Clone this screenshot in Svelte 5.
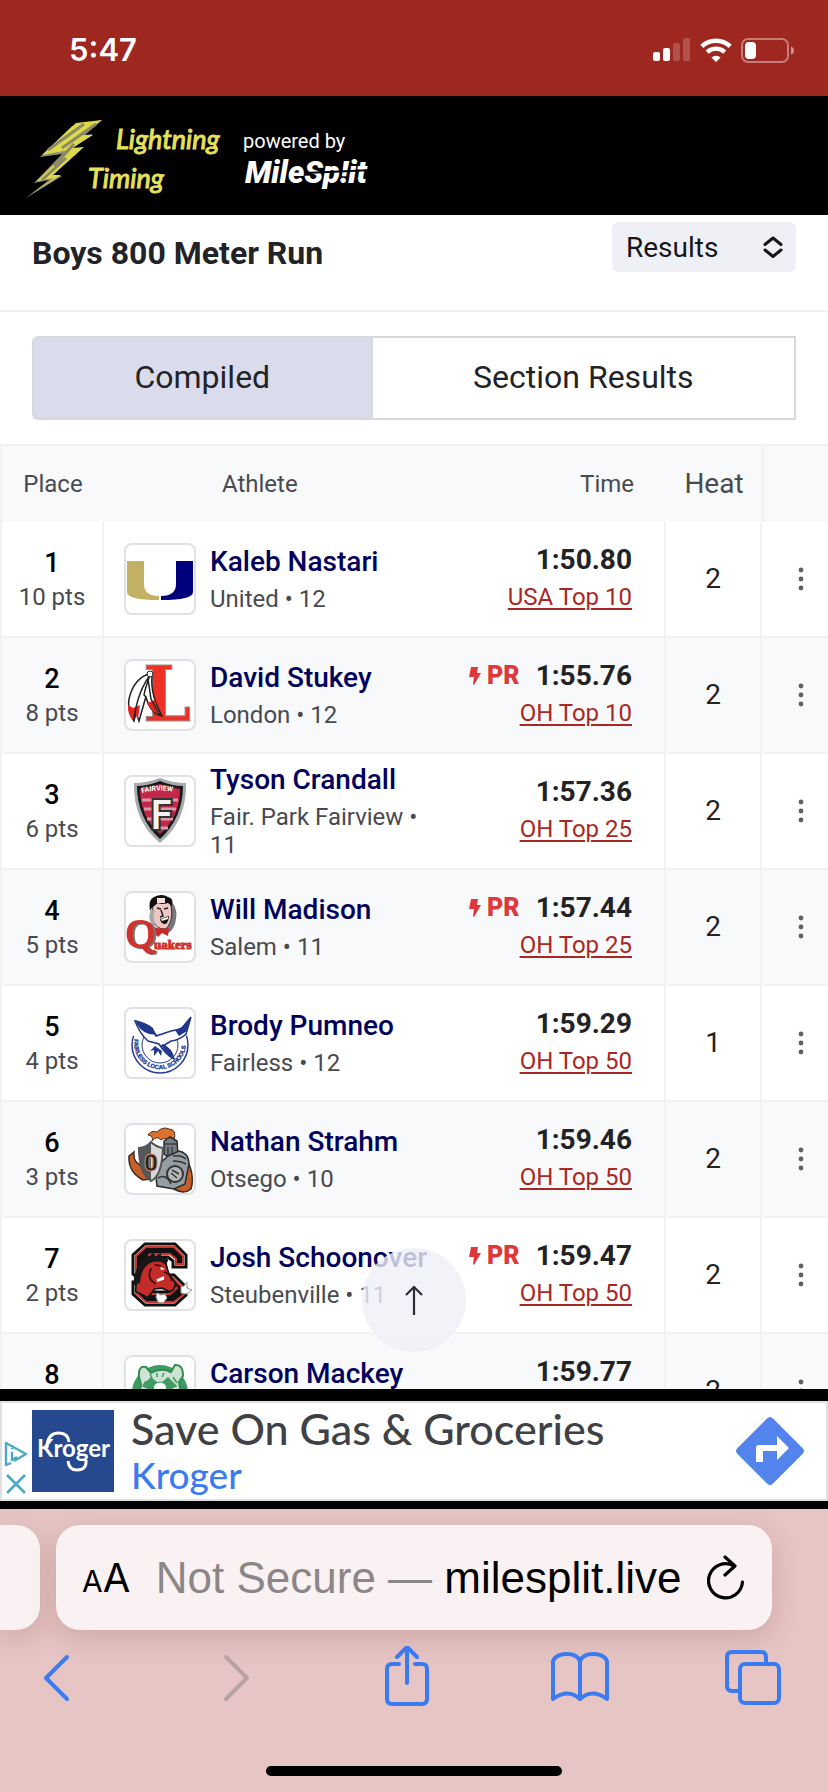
<script lang="ts">
	let view = 'Results';
	let activeTab = 'Compiled';
	let scroller = null;

	const tabs = ['Compiled', 'Section Results'];

	const results = [
		{ place: 1, pts: 10, name: 'Kaleb Nastari', school: 'United', grade: 12, time: '1:50.80', rank: 'USA Top 10', heat: 2 },
		{ place: 2, pts: 8, name: 'David Stukey', school: 'London', grade: 12, time: '1:55.76', rank: 'OH Top 10', heat: 2, pr: true },
		{ place: 3, pts: 6, name: 'Tyson Crandall', school: 'Fair. Park Fairview', grade: 11, time: '1:57.36', rank: 'OH Top 25', heat: 2 },
		{ place: 4, pts: 5, name: 'Will Madison', school: 'Salem', grade: 11, time: '1:57.44', rank: 'OH Top 25', heat: 2, pr: true },
		{ place: 5, pts: 4, name: 'Brody Pumneo', school: 'Fairless', grade: 12, time: '1:59.29', rank: 'OH Top 50', heat: 1 },
		{ place: 6, pts: 3, name: 'Nathan Strahm', school: 'Otsego', grade: 10, time: '1:59.46', rank: 'OH Top 50', heat: 2 },
		{ place: 7, pts: 2, name: 'Josh Schoonover', school: 'Steubenville', grade: 11, time: '1:59.47', rank: 'OH Top 50', heat: 2, pr: true },
		{ place: 8, name: 'Carson Mackey', time: '1:59.77', heat: 2 }
	];

	const scrollToTop = () => {
		scroller.scrollTo({ top: 0, behavior: 'smooth' });
	};
</script>

<div class="phone">
	<div class="status">
		<span class="clock">5:47</span>
		<div class="status-icons">
			<svg width="38" height="24" viewBox="0 0 38 24" fill="#fff">
				<rect x="0" y="14" width="7" height="9" rx="2" />
				<rect x="10" y="10" width="7" height="13" rx="2" />
				<rect x="20" y="5" width="7" height="18" rx="2" opacity=".2" />
				<rect x="30" y="0" width="7" height="23" rx="2" opacity=".2" />
			</svg>
			<svg width="32" height="24" viewBox="0 0 32 24" fill="none" stroke="#fff" stroke-width="4.4">
				<path d="M1.8 8.4a20.6 20.6 0 0 1 28.4 0" />
				<path d="M7.2 14.2a12.7 12.7 0 0 1 17.6 0" />
				<path d="M16 24l-4.6-4.5a6.6 6.6 0 0 1 9.2 0z" fill="#fff" stroke="none" />
			</svg>
			<svg width="54" height="25" viewBox="0 0 54 25">
				<rect x="1" y="1" width="46" height="23" rx="6" fill="none" stroke="#fff" stroke-width="2" opacity=".4" />
				<rect x="4" y="4" width="11" height="17" rx="4" fill="#fff" />
				<path d="M50 8.500q3 1 3 4t-3 4z" fill="#fff" opacity=".5" />
			</svg>
		</div>
	</div>

	<header class="brand">
		<svg width="202" height="88" viewBox="0 0 202 88" role="img" aria-label="Lightning Timing">
			<path d="M78 6L48 12 16 43l22-3L10 69l15-3L2 84l36-22-10-1 28-25-8-1 21-15-8 1z" fill="#8d8d80" />
			<path d="M78 6L52 9 18 41l27-5L13 67l17-3L7 80l30-19-8 0 31-28-12 1 21-13-12 0z" fill="#ddd94a" />
			<path d="M72 10L38 34M50 30L30 52M42 44L18 66M60 10L24 36" stroke="#8a8b62" stroke-width="3" fill="none" />
			<g class="script">
				<text x="92" y="35">Lightning</text>
				<text x="64" y="74">Timing</text>
			</g>
		</svg>
		<div class="powered">
			<span>powered by</span>
			<svg width="140" height="42" viewBox="0 0 140 42" role="img" aria-label="MileSplit">
				<text class="milesplit" x="2" y="30">MileSp!it</text>
				<path d="M62 19l68-3v2l-68 3z" fill="#000" />
			</svg>
		</div>
	</header>

	<main>
		<div class="scroller" bind:this={scroller}>
			<div class="event">
				<h1>Boys 800 Meter Run</h1>
				<div class="picker">
					<select bind:value={view} aria-label="View">
						<option>Results</option>
						<option>Entries</option>
					</select>
					<svg width="20" height="22" viewBox="0 0 20 22" fill="none" stroke="#15161c" stroke-width="3" stroke-linecap="round" stroke-linejoin="round">
						<path d="M2 8.500l8-6.500 8 6.500M2 14l8 6.500 8-6.500" />
					</svg>
				</div>
			</div>

			<div class="tabs">
				{#each tabs as tab}
					<button class:active={tab === activeTab} on:click={() => (activeTab = tab)}>{tab}</button>
				{/each}
			</div>

			<table>
				<colgroup>
					<col class="col-place" />
					<col />
					<col class="col-time" />
					<col class="col-heat" />
					<col class="col-menu" />
				</colgroup>
				<thead>
					<tr>
						<th>Place</th>
						<th class="athlete-head">Athlete</th>
						<th class="time-head">Time</th>
						<th class="heat-head">Heat</th>
						<th></th>
					</tr>
				</thead>
				<tbody>
					{#each results as r}
						<tr>
							<td class="place">
								<strong>{r.place}</strong>
								<span>{#if r.pts}{r.pts} pts{/if}</span>
							</td>
							<td>
								<div class="athlete">
									<div class="logo">
										<svg viewBox="0 0 68 68" aria-hidden="true">
											{#if r.place === 1}
												<path d="M1 16h17v23q0 12 15 12v4Q1 55 1 47z" fill="#c3b163" />
												<path d="M67 16H50v23q0 12-15 12v4q32 0 32-8z" fill="#00007d" />
											{:else if r.place === 2}
												<text x="17" y="60" font-family="DejaVu Serif Condensed, DejaVu Serif, serif" font-weight="700" font-size="76" fill="#ee3124" stroke="#9a8f8f">L</text>
												<path d="M26 12Q8 16 3 38q-2 10 5 22l2-8 3 8Q18 42 24 22z" fill="#fff" stroke="#222" stroke-width="1.500" />
												<path d="M24 14q-5 14-6 20l2 2q4 16 16 19Q30 44 28 36q-3-12-2-20z" fill="#fff" stroke="#222" stroke-width="1.500" />
												<path d="M2 44l5 3 7-3-2 14-3-6-2 8Q1 52 2 44zM21 42l8-3q1 10 6 15-10-3-14-12z" fill="#e52420" />
												<path d="M26 12Q12 28 8 58M22 18l3 20 9 16" fill="none" stroke="#222" stroke-width="1.500" />
												<circle cx="24" cy="13" r="3" fill="#fff" stroke="#222" />
											{:else if r.place === 3}
												<path d="M34 1q13 5 26 5 1 38-26 60Q7 44 8 6q13 0 26-5z" fill="#a7abae" />
												<path d="M34 4q12 5 23 5 0 32-23 53Q11 41 11 9q11 0 23-5z" fill="#191a1e" />
												<path d="M34 7q10 4 20 5 0 28-20 45Q14 40 14 12q10-1 20-5z" fill="#c52748" />
												<path d="M16 23h36M18 32h32M21 42h26M26 51h16" stroke="#d99aa8" stroke-width="3" />
												<path id="arch" d="M16 16q18-5 38 0" fill="none" />
												<text font-family="Roboto, sans-serif" font-size="7" font-weight="700" fill="#fff"><textPath href="#arch">FAIRVIEW</textPath></text>
												<text x="23" y="53" font-family="DejaVu Sans Condensed, DejaVu Sans, sans-serif" font-weight="700" font-size="42" fill="#f2f2f2" stroke="#333" stroke-width="2">F</text>
											{:else if r.place === 4}
												<path d="M28 26q-2-10 2-18l14-1q7 8 3 22-4 10-9 9-7-2-10-12z" fill="#777" transform="translate(2 2)" />
												<path d="M27 28q-3-10 2-19l14-2q4 8 2 20-3 9-7 9-7 0-11-8z" fill="#f0c6c4" stroke="#333" />
												<path d="M24 18q-2-12 4-14 8-4 14 0 6 1 4 9l-4-3q-6 2-10 0l-4 3q-3 2-4 5z" fill="#111" />
												<path d="M31 5h8v5h-8z" fill="#f4dede" />
												<path d="M25 17q-4 8 1 15l4 2q-4-9-1-17z" fill="#aaa" />
												<path d="M31 15l4 1M38 16l4-1M35 17l2 6-3 1" stroke="#222" stroke-width="1.500" fill="none" />
												<path d="M34 26l9-3q-1 8-4 8-4 0-5-5z" fill="#111" /><path d="M35 26l7-2v2l-6 2z" fill="#fff" />
												<path d="M28 34q8 3 15 1l-1 8-6-3-4 4-4-4z" fill="#ca2824" />
												<text class="shadowed" x="0" y="54" font-family="Liberation Serif, serif" font-size="40" fill="#cf332d" stroke="#cf332d" stroke-width="2">Q</text>
												<text x="28" y="56" font-family="Liberation Serif, serif" font-size="13" font-weight="700" fill="#cf332d" stroke="#cf332d">uakers</text>
											{:else if r.place === 5}
												<circle cx="34" cy="36" r="28" fill="none" stroke="#2a3d96" stroke-width="1.500" />
												<circle cx="34" cy="36" r="18" fill="none" stroke="#2a3d96" />
												<path d="M3 27V6h62v20l-23 2-10-2z" fill="#fff" />
												<path id="ring" d="M9 27a26 26 0 1 0 50 0" fill="none" />
												<text font-family="Liberation Sans, sans-serif" font-size="6" font-weight="700" fill="#23378f" stroke="#23378f" stroke-width=".3"><textPath href="#ring" startOffset="3">FAIRLESS LOCAL SCHOOLS</textPath></text>
												<path d="M9 12q12 3 17 7l4 8 15-5 10-2 10-12-5 17q-6 6-15 7l-8 5q8 2 11 13-9-5-15-15l-11-3q-8-7-13-20z" fill="#fff" stroke="#23378f" stroke-width="1.500" />
												<path d="M9 11q12 3 17 8l5 7-8-1Q13 22 9 11zM49 21l7-3 9-10-4 14-8 5zM37 35q9 4 11 14-7-2-13-13zM29 37l7 5-1 5-3-5-4 5 0-6-4 1z" fill="#23378f" />
											{:else if r.place === 6}
												<path d="M3 31l5-4q-1 9 5 12l12 15-8 1Q2 47 3 31zM57 28q13 20 8 36-7 6-17 0l8-12z" fill="#c5602a" stroke="#402a21" stroke-width="1.500" />
												<path d="M22 10q3-5 9-3 6-6 12-3 8 0 5 12l-4 1q-4-6-9-2-4-5-9 1 2-5-4-6z" fill="#dc712e" stroke="#51301e" />
												<path d="M38 16l6-4 7 4 1 14-7 4-7-5z" fill="#777c82" stroke="#292b2d" stroke-width="1.500" />
												<path d="M39 19h12M42 22v8M46 22v9" stroke="#222" />
												<path d="M42 31l11-5q10 2 10 13l-4 20-11 5-17-3-2-18z" fill="#969da2" stroke="#292b2d" stroke-width="1.500" />
												<path d="M13 23q7 0 12-6 5 5 12 6-1 28-12 33-12-8-12-33z" fill="#d8d8d8" stroke="#555" stroke-width="2" />
												<path d="M13 23q7 0 12-6v39q-12-8-12-33z" fill="#55585c" />
												<text x="18" y="46" font-family="Roboto, sans-serif" font-size="24" font-weight="900" fill="#222" stroke="#d88a66">0</text>
												<circle cx="49" cy="49" r="8" fill="#b5b8ba" stroke="#333" stroke-width="2" />
												<path d="M45 48l6 5M46 45l7 4M32 53q8-5 13 6M47 31q8-1 13 3M47 36q8 0 13 3" fill="none" stroke="#333" stroke-width="1.500" />
											{:else if r.place === 7}
												<path d="M19 3h30l11 11v12H47v-6l-5-4H25l-4 4v9l5 5h22l12 12v8L49 64H19L7 53V41h14v6l5 4h17l4-4-5-4H19L7 33V14z" fill="#fff" stroke="#111" stroke-width="3" />
												<path d="M20 6h28l9 9v8h-7v-5l-6-5H24l-6 6v13l7 5h22l10 10v7l-9 7H20l-10-9v-8h8l7 9h19l7-6-7-5H20L10 32V15z" fill="#111" stroke="#c93330" stroke-width="2" />
												<g transform="translate(2 5) scale(.86)">
													<path d="M20 14l16-2 8 8 3 11 8 12q0 9-7 10l-8-4-9 1-8 10-14-7q-1-20 11-39z" fill="#c32c29" stroke="#171717" stroke-width="2" />
													<path d="M6 46q1-22 14-33l-3-5 8 4 4-5 3 5 6-4 1 7q5-3 8 1l-3 6q-7-6-16-3-13 5-14 24z" fill="#171717" />
													<path d="M27 26q-6 11 5 18M42 30q8 3 9 11M31 22l8 1" fill="none" stroke="#3c0e0e" stroke-width="2" />
													<path d="M38 24l5 3-5 1zM33 39l9-4v4l-8 3z" fill="#fff" />
												</g>
												<path d="M31 52l4 2 4-1 2 4-4 5-5-1-2-5zM55 46l3-1 3-4v6l5 2-5 4-6-1z" fill="#fff" stroke="#999" />
											{:else}
												<circle cx="34" cy="36" r="28" fill="#409b62" />
												<path d="M13 20q-1-12 7-10l5 6q10-6 20-1l4-7q8-1 8 11l-4 6 5 30H11l4-28z" fill="#cfe3d4" stroke="#2f8d54" stroke-width="2" />
												<path d="M17 29l8-8 7 6-4 7zM50 29l-8-8-7 6 4 7zM24 17l2 4M31 16v4M38 16l-2 4M20 24l-3 5M47 20l4 6" fill="#409b62" stroke="#409b62" stroke-width="1.500" />
												<path d="M28 28q6-6 12 0l2 14H26z" fill="#fff" stroke="#409b62" />
											{/if}
										</svg>
									</div>
									<div class="who">
										<strong>{r.name}</strong>
										<span>{#if r.school}{r.school} • {r.grade}{/if}</span>
									</div>
								</div>
							</td>
							<td class="time">
								<div class="mark">
									{#if r.pr}
										<span class="pr">
											<svg width="12" height="18" viewBox="0 0 12 18" fill="#dd393a"><path d="M2 0h7L8 6h4L5 18l-1-1 1-7H0z" /></svg>PR
										</span>
									{/if}
									<strong>{r.time}</strong>
								</div>
								<a href="#rank-{r.place}">{r.rank ?? ''}</a>
							</td>
							<td class="heat">{r.heat}</td>
							<td class="menu">
								<button aria-label="Options for {r.name}">
									<svg width="6" height="24" viewBox="0 0 6 24" fill="#5f6063">
										<circle cx="3" cy="3" r="2.400" /><circle cx="3" cy="12" r="2.400" /><circle cx="3" cy="21" r="2.400" />
									</svg>
								</button>
							</td>
						</tr>
					{/each}
				</tbody>
			</table>
		</div>

		<button class="to-top" aria-label="Back to top" on:click={scrollToTop}>
			<svg width="18" height="30" viewBox="0 0 18 30" fill="none" stroke="#2b2c33" stroke-width="2.200">
				<path d="M9 30V2M1 10l8-8 8 8" />
			</svg>
		</button>
	</main>

	<aside class="ad-strip">
		<div class="ad">
			<div class="ad-choices">
				<svg width="24" height="25" viewBox="0 0 24 25" fill="none" stroke="#4ba9c4" stroke-width="2.400" stroke-linejoin="round">
					<path d="M7 22l-5 2V2l20 11-12 7M8 7v1M8 11v8l5-3" />
				</svg>
				<svg width="20" height="20" viewBox="0 0 20 20" stroke="#4ba9c4" stroke-width="2.600"><path d="M1 1l18 18M19 1L1 19" /></svg>
			</div>
			<svg class="kroger" width="82" height="82" viewBox="0 0 82 82" role="img" aria-label="Kroger">
				<rect width="82" height="82" fill="#25488f" />
				<text x="5" y="47" font-family="Lato, sans-serif" font-size="24" font-weight="700" fill="#fff">Kroger</text>
				<path d="M15 38q0-15 12-15 9 0 10 9M36 51q1 9 9 9 10 0 9-10" fill="none" stroke="#fff" stroke-width="3" />
			</svg>
			<div class="ad-text">
				<strong>Save On Gas &amp; Groceries</strong>
				<a href="#kroger">Kroger</a>
			</div>
			<svg width="68" height="68" viewBox="0 0 68 68" aria-hidden="true">
				<path d="M31 1.500q3-3 6 0L66.500 31q3 3 0 6L37 66.500q-3 3-6 0L1.500 37q-3-3 0-6z" fill="#5384ed" />
				<path d="M20 45V31q0-3 3-3h18V19l12 12-12 12v-9H27v11z" fill="#fff" />
			</svg>
		</div>
	</aside>

	<footer class="browser">
		<div class="address-row">
			<div class="previous-page"></div>
			<div class="address">
				<button class="reader" aria-label="Page settings"><small>A</small>A</button>
				<button class="url"><span>Not Secure —</span> milesplit.live</button>
				<button aria-label="Reload">
					<svg width="38" height="46" viewBox="0 0 38 46" fill="none" stroke="#000" stroke-width="3.200" stroke-linecap="round" stroke-linejoin="round">
						<path d="M27 11a17 17 0 1 0 8.500 16M18 2l10 9-10 9" />
					</svg>
				</button>
			</div>
		</div>
		<nav>
			<button aria-label="Back">
				<svg viewBox="0 0 64 64"><path d="M43 11L22 32l21 21" /></svg>
			</button>
			<button aria-label="Forward" disabled>
				<svg viewBox="0 0 64 64"><path d="M28 11l21 21-21 21" /></svg>
			</button>
			<button aria-label="Share">
				<svg viewBox="0 0 64 64"><path d="M26 18h-7q-5 0-5 5v30q0 5 5 5h30q5 0 5-5V23q0-5-5-5h-7M34 37V2M24 11L34 1l10 10" /></svg>
			</button>
			<button aria-label="Bookmarks">
				<svg viewBox="0 0 64 64"><path d="M33 15v38q-12-11-27 0V15Q9 8 20 8q10 0 13 7 3-7 13-7 11 0 14 7v38q-15-11-27 0" /></svg>
			</button>
			<button aria-label="Tabs">
				<svg viewBox="0 0 64 64"><rect x="19" y="18" width="39" height="39" rx="5" /><path d="M19 45h-8q-5 0-5-5V11q0-5 5-5h29q5 0 5 5v7" /></svg>
			</button>
		</nav>
		<div class="home"></div>
	</footer>
</div>

<style>
	:global(body) {
		margin: 0;
	}

	.phone {
		display: flex;
		flex-direction: column;
		height: 100vh;
		background: #fff;
		color: #222327;
		font-family: Roboto, sans-serif;
		-webkit-font-smoothing: antialiased;
	}

	button {
		padding: 0;
		border: 0;
		background: none;
		color: inherit;
		font: inherit;
		cursor: pointer;
	}

	svg {
		display: block;
		flex: none;
	}

	.status {
		display: flex;
		flex: none;
		align-items: center;
		justify-content: space-between;
		box-sizing: border-box;
		height: 96px;
		padding: 4px 33px 0 69px;
		background: #9e2720;
		color: #fff;
	}

	.clock {
		font: 600 31px/40px Inter, sans-serif;
	}

	.status-icons {
		display: flex;
		align-items: center;
		gap: 9px;
	}

	.brand {
		display: flex;
		flex: none;
		align-items: center;
		gap: 17px;
		box-sizing: border-box;
		height: 119px;
		padding: 4px 24px 0;
		background: #000;
		color: #fff;
	}

	.script {
		fill: #e6e15c;
		stroke: #e6e15c;
		font: italic 400 27px Lato, cursive;
	}

	.powered {
		padding-top: 8px;
		font-size: 20px;
		line-height: 24px;
	}

	.milesplit {
		fill: #fff;
		font: italic 900 31px Roboto, sans-serif;
	}

	main {
		position: relative;
		flex: 1;
		min-height: 0;
	}

	.scroller {
		height: 100%;
		overflow: hidden;
	}

	.event {
		display: flex;
		align-items: flex-start;
		justify-content: space-between;
		padding: 7px 32px 38px;
		border-bottom: 2px solid #f1f1f3;
	}

	h1 {
		margin: 12px 0 0;
		font-size: 32px;
		line-height: 38px;
		font-weight: 700;
	}

	.picker {
		display: grid;
		align-items: center;
		width: 184px;
	}

	.picker select,
	.picker svg {
		grid-area: 1 / 1;
	}

	.picker svg {
		justify-self: end;
		margin-right: 13px;
		pointer-events: none;
	}

	select {
		appearance: none;
		height: 50px;
		padding: 0 14px;
		border: 0;
		border-radius: 6px;
		background: #eff0f6;
		color: #15161c;
		font: 28px Roboto, sans-serif;
	}

	.tabs {
		display: flex;
		padding: 24px 32px;
	}

	.tabs button {
		flex: 1 1 auto;
		height: 84px;
		padding-bottom: 2px;
		border: 2px solid #d8d9dd;
		border-left: 0;
		font-size: 32px;
	}

	.tabs button:first-child {
		border-left: 2px solid #d8d9dd;
		border-radius: 6px 0 0 6px;
	}

	.tabs .active {
		background: #dadceb;
	}

	table {
		width: 100%;
		table-layout: fixed;
		border-collapse: separate;
		border-spacing: 0;
		border-left: 2px solid #f2f2f4;
	}

	.col-place {
		width: 102px;
	}

	.col-time {
		width: 234px;
	}

	.col-heat {
		width: 96px;
	}

	.col-menu {
		width: 66px;
	}

	th,
	td {
		box-sizing: border-box;
		padding: 0;
		border-right: 2px solid #f2f2f4;
		border-bottom: 2px solid #f2f2f4;
	}

	th {
		height: 78px;
		border-top: 2px solid #f2f2f4;
		border-right: 0;
		border-bottom: 0;
		background: #f8f9fb;
		color: #494a50;
		font-size: 24px;
		font-weight: 400;
	}

	th:last-child {
		border-left: 2px solid #f2f2f4;
	}

	.athlete-head {
		padding-left: 118px;
		text-align: left;
	}

	.time-head {
		padding-right: 32px;
		text-align: right;
	}

	.heat-head {
		padding-bottom: 2px;
		font-size: 28px;
	}

	td {
		height: 116px;
	}

	td:nth-child(2),
	td:last-child {
		border-right: 0;
	}

	tr:nth-child(even) td {
		background: #f8f9fb;
	}

	.place {
		color: #494a50;
		font-size: 24px;
		line-height: 32px;
		text-align: center;
	}

	.place strong,
	.place span {
		display: block;
		min-height: 32px;
	}

	.place strong {
		color: #000;
		font-size: 27px;
		line-height: 36px;
		font-weight: 500;
	}

	.athlete {
		display: flex;
		align-items: center;
		gap: 14px;
		padding-left: 20px;
	}

	.logo {
		flex: none;
		width: 68px;
		height: 68px;
		overflow: hidden;
		border: 2px solid #e1e1e5;
		border-radius: 8px;
		background: #fff;
	}

	.shadowed {
		filter: drop-shadow(2px 1px 0 #777);
	}

	.who strong {
		display: block;
		margin-bottom: 6px;
		color: #00005c;
		font-size: 28px;
		line-height: 34px;
		font-weight: 500;
		white-space: nowrap;
	}

	.who span {
		display: block;
		min-height: 28px;
		color: #494a50;
		font-size: 24px;
		line-height: 28px;
	}

	.time {
		padding: 0 32px 2px 0;
		text-align: right;
	}

	.mark {
		display: flex;
		align-items: center;
		justify-content: flex-end;
		gap: 16px;
		margin-bottom: 4px;
		font-size: 28px;
		line-height: 34px;
	}

	.pr {
		display: flex;
		align-items: center;
		gap: 6px;
		color: #dd393a;
		font-size: 25px;
		font-weight: 900;
	}

	.time a {
		display: block;
		min-height: 32px;
		color: #aa2823;
		font-size: 24px;
		line-height: 32px;
		text-underline-offset: 3px;
		text-decoration-thickness: 2px;
	}

	.heat {
		padding-bottom: 2px;
		font-size: 28px;
		text-align: center;
	}

	.menu button {
		display: flex;
		align-items: center;
		justify-content: flex-end;
		width: 100%;
		height: 64px;
		padding-right: 24px;
	}

	.to-top {
		position: absolute;
		bottom: 37px;
		left: calc(50% - 52px);
		display: grid;
		place-items: center;
		width: 104px;
		height: 104px;
		border-radius: 50%;
		background: rgba(239, 240, 247, 0.8);
	}

	.ad-strip {
		flex: none;
		padding: 12px 0 8px;
		background: #000;
	}

	.ad {
		display: flex;
		align-items: center;
		box-sizing: border-box;
		height: 100px;
		padding: 0 22px 0 2px;
		border: 2px solid #e0e0e2;
		background: #fff;
	}

	.ad-choices {
		display: flex;
		flex-direction: column;
		align-items: center;
		align-self: flex-end;
		gap: 8px;
		width: 24px;
		padding-bottom: 5px;
	}

	.kroger {
		margin: 0 17px 0 4px;
	}

	.ad-text {
		flex: 1;
		font-family: Lato, sans-serif;
		white-space: nowrap;
	}

	.ad-text strong,
	.ad-text a {
		display: block;
		font-weight: 500;
	}

	.ad-text strong {
		color: #404145;
		font-size: 43px;
		line-height: 48px;
	}

	.ad-text a {
		color: #3b7bf0;
		font-size: 37px;
		line-height: 44px;
		text-decoration: none;
	}

	.browser {
		flex: none;
		overflow: hidden;
		padding: 16px 0;
		background: #e6c5c4;
	}

	.address-row {
		display: flex;
		gap: 16px;
		padding-right: 56px;
	}

	.previous-page,
	.address {
		height: 105px;
		background: #faf2f2;
		box-shadow: 0 8px 28px rgba(90, 20, 20, 0.17);
	}

	.previous-page {
		flex: none;
		width: 40px;
		border-radius: 0 24px 24px 0;
	}

	.address {
		display: flex;
		flex: 1;
		align-items: center;
		justify-content: space-between;
		box-sizing: border-box;
		padding: 0 27px 0 26px;
		border-radius: 24px;
		color: #000;
		font-family: Inter, sans-serif;
	}

	.reader {
		font-size: 40px;
	}

	.reader small {
		font-size: 30px;
	}

	.url {
		font-family: 'Liberation Sans', sans-serif;
		font-size: 44px;
		white-space: nowrap;
	}

	.url span {
		color: #8b8687;
	}

	nav {
		display: flex;
		justify-content: space-between;
		padding: 16px 43px 0 24px;
	}

	nav button,
	nav svg {
		width: 64px;
		height: 64px;
	}

	nav svg {
		fill: none;
		stroke: #3b7bf0;
		stroke-width: 4;
		stroke-linecap: round;
		stroke-linejoin: round;
	}

	nav button:disabled svg {
		stroke: #b9a2a4;
	}

	.home {
		width: 296px;
		height: 10px;
		margin: 56px auto 0;
		border-radius: 5px;
		background: #000;
	}
</style>
